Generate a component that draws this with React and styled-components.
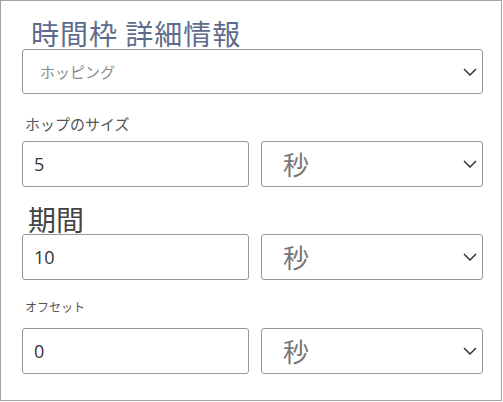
import React from "react";
import styled, { createGlobalStyle } from "styled-components";

const Global = createGlobalStyle`
  html, body { margin: 0; padding: 0; background: #fff; }
  * { box-sizing: border-box; }
`;

const Panel = styled.div`
  width: 502px;
  height: 401px;
  border: 1px solid #a3a3a3;
  background: #fff;
  padding: 17px 18px 0 21px;
  display: flex;
  flex-direction: column;
  font-family: "Noto Sans CJK JP", "Noto Sans", sans-serif;
`;

const Title = styled.h2`
  margin: 0 0 0 9px;
  font-size: 28px;
  line-height: 31px;
  font-weight: 400;
  letter-spacing: 1px;
  color: #5d6c8c;
`;

const Label = styled.div`
  font-size: ${(p) => p.$size}px;
  line-height: ${(p) => p.$lh}px;
  margin: ${(p) => p.$mt}px 0 ${(p) => p.$mb}px ${(p) => p.$ml}px;
  color: ${(p) => p.$color};
  font-weight: 400;
`;

const SelectBox = styled.div`
  height: ${(p) => p.$h}px;
  border: 1px solid #979797;
  border-radius: 3px;
  display: flex;
  align-items: center;
  justify-content: space-between;
  padding: 0 5px 0 ${(p) => p.$pl}px;
  background: #fff;
`;

const SelectText = styled.span`
  font-size: ${(p) => p.$size}px;
  color: ${(p) => p.$color};
  line-height: 1;
`;

const Row = styled.div`
  display: grid;
  grid-template-columns: 227px 222px;
  column-gap: 12px;
  height: 46px;
`;

const InputBox = styled.div`
  border: 1px solid #979797;
  border-radius: 3px;
  display: flex;
  align-items: center;
  padding-left: 11px;
  font-family: "Open Sans", "Noto Sans", sans-serif;
  font-size: 18px;
  color: #333;
`;

const Chevron = () => (
  <svg width="14" height="8" viewBox="0 0 14 8">
    <polyline points="1,1 7,7 13,1" fill="none" stroke="#2f3640" strokeWidth="1.5" />
  </svg>
);

const Field = ({ value }) => (
  <Row>
    <InputBox>{value}</InputBox>
    <SelectBox $h={46} $pl={21}>
      <SelectText $size={26} $color="#777">秒</SelectText>
      <Chevron />
    </SelectBox>
  </Row>
);

export default function App() {
  return (
    <>
      <Global />
      <Panel>
        <Title>時間枠 詳細情報</Title>
        <SelectBox $h={45} $pl={17}>
          <SelectText $size={15} $color="#8a8a8a">ホッピング</SelectText>
          <Chevron />
        </SelectBox>
        <Label $size={15} $lh={20} $mt={20} $mb={7} $ml={3} $color="#555">ホップのサイズ</Label>
        <Field value="5" />
        <Label $size={28} $lh={30} $mt={17} $mb={0} $ml={6} $color="#444">期間</Label>
        <Field value="10" />
        <Label $size={12} $lh={18} $mt={18} $mb={12} $ml={3} $color="#555">オフセット</Label>
        <Field value="0" />
      </Panel>
    </>
  );
}
